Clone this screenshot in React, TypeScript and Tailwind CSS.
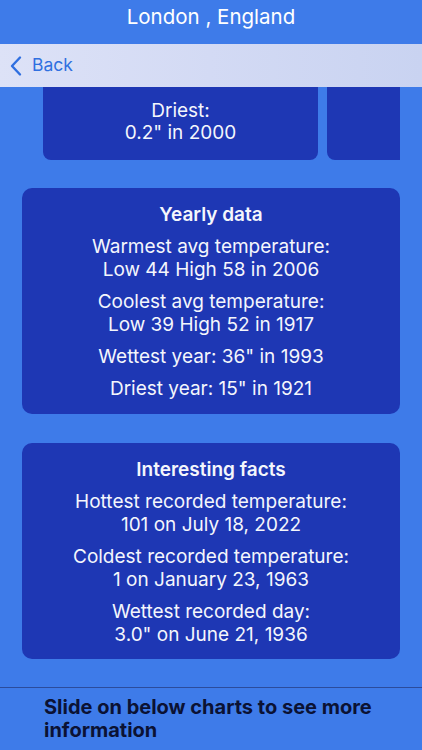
import React from 'react';

const yearly = [
  ['Warmest avg temperature:', 'Low 44 High 58 in 2006'],
  ['Coolest avg temperature:', 'Low 39 High 52 in 1917'],
  ['Wettest year: 36" in 1993'],
  ['Driest year: 15" in 1921'],
];

const facts = [
  ['Hottest recorded temperature:', '101 on July 18, 2022'],
  ['Coldest recorded temperature:', '1 on January 23, 1963'],
  ['Wettest recorded day:', '3.0" on June 21, 1936'],
];

function InfoCard({ title, rows, className }: { title: string; rows: string[][]; className: string }) {
  return (
    <div className={`mx-[22px] rounded-[10px] bg-[#1e37b4] pt-4 pb-[15px] text-center text-[#f4f6fc] ${className}`}>
      <div className="text-[19px] font-semibold leading-[22px]">{title}</div>
      <div className="mt-[9px] flex flex-col gap-[9px]">
        {rows.map((r, i) => (
          <div key={i} className="text-[19px] leading-[23px]">
            {r.map((line, j) => (
              <div key={j}>{line}</div>
            ))}
          </div>
        ))}
      </div>
    </div>
  );
}

export default function App() {
  return (
    <div className="h-[750px] w-[422px] overflow-hidden bg-[#3e7be9] font-['Inter','Liberation_Sans',sans-serif]">
      <div className="flex h-[44px] justify-center pt-[4px] text-[20.5px] leading-[26px] text-white">
        London , England
      </div>
      <div className="flex h-[43px] items-center bg-gradient-to-r from-[#dde2f7] via-[#d3daf4] to-[#c9d3f1] pl-[9px] text-[#2f6fe0]">
        <svg width="14" height="22" viewBox="0 0 14 22" fill="none">
          <path d="M11 2.5 L3 11 L11 19.5" stroke="currentColor" strokeWidth="2.4" strokeLinecap="round" strokeLinejoin="round" />
        </svg>
        <span className="ml-[9px] text-[17.5px]">Back</span>
      </div>
      <div className="ml-[22px] h-[73px] w-[378px] overflow-hidden">
        <div className="flex h-full gap-[9px] pl-[21px]">
          <div className="flex h-full w-[275px] shrink-0 flex-col items-center justify-center rounded-b-[8px] bg-[#1e37b4] pb-[4px] text-[19px] leading-[22px] text-[#f4f6fc]">
            <div>Driest:</div>
            <div>0.2" in 2000</div>
          </div>
          <div className="h-full w-[275px] shrink-0 rounded-b-[8px] bg-[#1e37b4]" />
        </div>
      </div>
      <InfoCard title="Yearly data" rows={yearly} className="mt-[28px] h-[226px]" />
      <InfoCard title="Interesting facts" rows={facts} className="mt-[29px] h-[216px]" />
      <div className="mt-[28px] border-t border-[#2b4c9c]" />
      <div className="px-[44px] pt-[8px] text-[20px] font-bold leading-[23px] text-[#0b1234]">
        Slide on below charts to see more information
      </div>
    </div>
  );
}
